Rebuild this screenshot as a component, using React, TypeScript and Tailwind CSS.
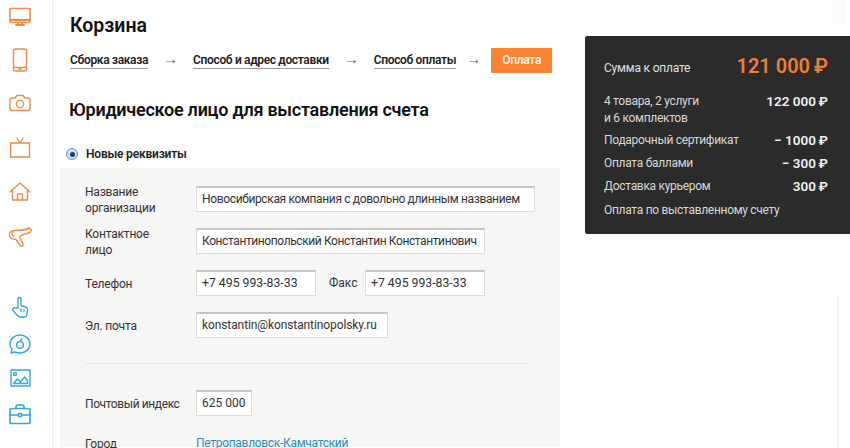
const orange = "#f08a4b";
const blue = "#35a9d2";

function Icon({ color, children }: { color: string; children: React.ReactNode }) {
  return (
    <svg width="24" height="24" viewBox="0 0 24 24" fill="none" stroke={color} strokeWidth="1.4" strokeLinejoin="round" strokeLinecap="round">
      {children}
    </svg>
  );
}

function Sidebar() {
  return (
    <aside className="w-[53px] h-[448px] shrink-0 border-r border-[#ececec] overflow-hidden">
      <div className="ml-[8px] mt-[3px] flex flex-col">
        <div className="h-[24px]">
          <Icon color={orange}>
            <rect x="2" y="5.500" width="20" height="14" rx="1" strokeWidth="1.600" />
            <path d="M2 17h20M8 22h8" strokeWidth="2" />
            <path d="M10 20v1.500M14 20v1.500" />
          </Icon>
        </div>
        <div className="h-[24px] mt-[21px]">
          <Icon color={orange}>
            <rect x="5.500" y="1" width="13" height="22" rx="2" />
            <path d="M5.500 19.500h13M11 21.300h2" />
          </Icon>
        </div>
        <div className="h-[24px] mt-[19px]">
          <Icon color={orange}>
            <path d="M2 9a2 2 0 0 1 2-2h3l2-2.500h6l2 2.500h3a2 2 0 0 1 2 2v9a1.500 1.500 0 0 1-1.500 1.500h-17A1.500 1.500 0 0 1 2 18z" />
            <circle cx="12" cy="13" r="3.600" />
          </Icon>
        </div>
        <div className="h-[24px] mt-[21px]">
          <Icon color={orange}>
            <rect x="2.500" y="7" width="19" height="14" />
            <path d="M9 2l3 5 3-5" />
          </Icon>
        </div>
        <div className="h-[24px] mt-[19px]">
          <Icon color={orange}>
            <path d="M2 13 12 4l10 9M4.500 11.500V21h15v-9.500M9.500 21v-6h5v6" />
          </Icon>
        </div>
        <div className="h-[24px] mt-[22px]">
          <Icon color={orange}>
            <path d="M1.500 9C2 6 5 5.500 8 5.500c4 0 9-.5 13-2.500l2.500 2-1.500 2.500-8 2.500-2.500 1.500 3.500 7.500c.5 1.500-1 3-2.500 2L8 14.500C4 14.500 1 13 1.500 9z" />
            <path d="M4.500 8c-.6 1.200 0 2.500 1 3" />
          </Icon>
        </div>
        <div className="h-[24px] mt-[46px]">
          <Icon color={blue}>
            <path d="M10 12.500V4a1.500 1.500 0 0 1 3 0v6.500l4.500 1.500c1.500.5 2 1.500 2 2.500l-.5 5c-.2 1.500-1 2.500-2.500 2.500h-4c-1.500 0-2.500-1-3.500-2l-4-4.500c-1-1.500.8-3.500 2.500-2.500z" />
            <path d="M13 14v2.500M16 14.500v2" />
          </Icon>
        </div>
        <div className="h-[24px] mt-[12px]">
          <Icon color={blue}>
            <path d="M4 18.500C2.500 17 2 15 2 13 2 8 6.500 4 12 4s10 4 10 9-4.500 9-10 9c-2 0-3.500-.3-5-1l-4 1z" />
            <circle cx="12" cy="14" r="3.400" />
            <path d="M12.500 10.500c0-1 .5-2 1.500-2.500" />
          </Icon>
        </div>
        <div className="h-[24px] mt-[11px]">
          <Icon color={blue}>
            <rect x="3" y="4" width="19" height="16" />
            <circle cx="7" cy="8" r="1.500" />
            <path d="M5.500 17.500l4-4.500 3 3 4-5 3 3.500v3z" />
          </Icon>
        </div>
        <div className="h-[24px] mt-[12px]">
          <Icon color={blue}>
            <rect x="2" y="6.500" width="20" height="15" rx="1.500" strokeWidth="1.700" />
            <path d="M8 6.500V4.500A1.500 1.500 0 0 1 9.500 3h5A1.500 1.500 0 0 1 16 4.500v2M2 13h20" strokeWidth="1.700" />
            <rect x="10.500" y="11.500" width="3" height="3" fill="#fff" />
          </Icon>
        </div>
      </div>
    </aside>
  );
}

function Step({ label }: { label: string }) {
  return (
    <span className="shrink-0 border-b border-[#9a9a9a] text-[12px] tracking-[-0.35px] font-semibold leading-[16px] text-[#222] whitespace-nowrap">
      {label}
    </span>
  );
}

function Arrow({ width }: { width: string }) {
  return <span className={`${width} shrink-0 mb-[3px] text-center text-[15px] leading-[16px] text-[#666]`}>→</span>;
}

function Field({ value, width, text }: { value: string; width: string; text: string }) {
  return (
    <div className={`${width} ${text} h-[26px] shrink-0 bg-white border border-[#dedede] border-t-2 border-t-[#c6c6c6] px-[5px] leading-[23px] text-[#333] whitespace-nowrap`}>
      {value}
    </div>
  );
}

function Row({ label, children, cls }: { label: React.ReactNode; children: React.ReactNode; cls: string }) {
  return (
    <div className={`flex items-center ${cls}`}>
      <div className="w-[111px] pt-[1px] text-[12px] tracking-[-0.2px] leading-[16px] text-[#333] shrink-0">{label}</div>
      {children}
    </div>
  );
}

function SumRow({ label, value, cls }: { label: React.ReactNode; value?: string; cls: string }) {
  return (
    <div className={`flex justify-between items-start text-[12px] tracking-[-0.3px] leading-[17px] ${cls}`}>
      <div className="text-[#d8d8d8]">{label}</div>
      {value && <div className="font-semibold tracking-normal text-[13.500px] text-[#f0f0f0]">{value}</div>}
    </div>
  );
}

export default function App() {
  return (
    <div className="w-[850px] h-[448px] flex overflow-hidden bg-white font-['Roboto',sans-serif]">
      <Sidebar />
      <main className="w-[500px] shrink-0 ml-[7px] h-[448px] overflow-hidden">
        <h1 className="pl-[10px] mt-[13px] text-[19.500px] leading-[26px] font-semibold text-[#111]">Корзина</h1>
        <div className="flex items-center pl-[10px] mt-[9px] h-[25px]">
          <Step label="Сборка заказа" />
          <Arrow width="w-[45px]" />
          <Step label="Способ и адрес доставки" />
          <Arrow width="w-[45px]" />
          <Step label="Способ оплаты" />
          <Arrow width="w-[35px]" />
          <span className="w-[61px] h-[25px] shrink-0 bg-[#fb8332] rounded-[1px] text-center text-[12px] tracking-[-0.3px] font-semibold leading-[25px] text-white/90">Оплата</span>
        </div>
        <h2 className="pl-[9px] mt-[25px] text-[18px] tracking-[-0.25px] leading-[24px] font-semibold text-[#111]">Юридическое лицо для выставления счета</h2>
        <div className="flex items-center mt-[23px] pl-[6px] h-[18px]">
          <span className="w-[12px] h-[12px] rounded-full bg-[#cfe0f2] border border-[#6f95bd] flex items-center justify-center">
            <span className="w-[5px] h-[5px] rounded-full bg-[#1d3f6b]" />
          </span>
          <span className="ml-[8px] text-[12px] tracking-[-0.2px] font-semibold text-[#222]">Новые реквизиты</span>
        </div>
        <section className="mt-[5px] bg-[#f6f6f4] pl-[25px] pr-[33px] pt-[16px] h-[279px]">
          <Row label={<>Название<br />организации</>} cls="h-[30px]">
            <Field value="Новосибирская компания с довольно длинным названием" width="w-[339px]" text="text-[12px] tracking-[-0.35px]" />
          </Row>
          <Row label={<>Контактное<br />лицо</>} cls="h-[30px] mt-[12px]">
            <Field value="Константинопольский Константин Константинович" width="w-[289px]" text="text-[12px] tracking-[-0.4px]" />
          </Row>
          <Row label="Телефон" cls="h-[26px] mt-[14px]">
            <Field value="+7 495 993-83-33" width="w-[120px]" text="text-[12.250px]" />
            <span className="ml-[13px] w-[36px] text-[12px] text-[#333]">Факс</span>
            <Field value="+7 495 993-83-33" width="w-[120px]" text="text-[12.250px]" />
          </Row>
          <Row label="Эл. почта" cls="h-[26px] mt-[16px]">
            <Field value="konstantin@konstantinopolsky.ru" width="w-[192px]" text="text-[12px] tracking-[-0.1px]" />
          </Row>
          <div className="mt-[25px] border-t border-[#e8e8e6] w-[442px]" />
          <Row label={<span className="tracking-[-0.4px]">Почтовый индекс</span>} cls="h-[26px] mt-[26px]">
            <Field value="625 000" width="w-[56px]" text="text-[12px]" />
          </Row>
          <Row label="Город" cls="h-[17px] mt-[19px]">
            <span className="text-[12px] tracking-[-0.3px] leading-[17px] text-[#2b8cbf]">Петропавловск-Камчатский</span>
          </Row>
        </section>
      </main>
      <div className="ml-[25px] w-[265px] shrink-0 flex flex-col">
        <div className="ml-[247px] h-[24px] w-[14px] bg-[#fbfbfb]" />
        <div className="mt-[12px] h-[198px] bg-[#2b2b2b] rounded-l-[2px] pl-[19px] pr-[22px] pt-[14px]">
          <div className="flex justify-between items-center h-[28px]">
            <span className="text-[12px] tracking-[-0.2px] text-[#e0e0e0] mt-[7px]">Сумма к оплате</span>
            <span className="text-[20px] font-semibold text-[#ef7d33] mt-[4px]">121 000{"\u2009"}₽</span>
          </div>
          <SumRow label={<>4 товара, 2 услуги<br />и 6 комплектов</>} value={"122 000\u2009₽"} cls="mt-[15px]" />
          <SumRow label="Подарочный сертификат" value={"− 1000\u2009₽"} cls="mt-[5px]" />
          <SumRow label="Оплата баллами" value={"− 300\u2009₽"} cls="mt-[6px]" />
          <SumRow label="Доставка курьером" value={"300\u2009₽"} cls="mt-[6px]" />
          <SumRow label="Оплата по выставленному счету" cls="mt-[7px]" />
        </div>
        <div className="ml-[252px] mt-[62px] h-[152px] w-[2px] bg-[#f4f4f4]" />
      </div>
    </div>
  );
}
